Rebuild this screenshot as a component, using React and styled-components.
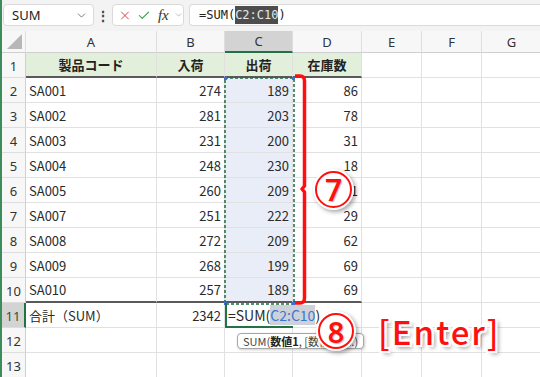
import React from 'react'
import styled, { createGlobalStyle } from 'styled-components'
import { X, Check, ChevronDown } from 'lucide-react'

const GlobalStyle = createGlobalStyle`
  html, body {
    margin: 0;
    padding: 0;
    background: #fff;
    overflow: hidden;
  }
  body {
    font-family: "Noto Sans CJK JP", "Noto Sans", sans-serif;
    color: #222;
  }
`

const COLS = [
  { key: 'A', w: 131 },
  { key: 'B', w: 68 },
  { key: 'C', w: 68 },
  { key: 'D', w: 69 },
  { key: 'E', w: 60 },
  { key: 'F', w: 60 },
  { key: 'G', w: 60 },
]

const DATA = [
  ['SA001', 274, 189, 86],
  ['SA002', 281, 203, 78],
  ['SA003', 231, 200, 31],
  ['SA004', 248, 230, 18],
  ['SA005', 260, 209, 51],
  ['SA007', 251, 222, 29],
  ['SA008', 272, 209, 62],
  ['SA009', 268, 199, 69],
  ['SA010', 257, 189, 69],
]

const App = () => {
  return (
    <Window>
      <GlobalStyle />
      <Toolbar>
        <NameBox>
          <span>SUM</span>
          <ChevronDown size={13} strokeWidth={1.4} color="#555" />
        </NameBox>
        <Dots>⋮</Dots>
        <FxBox>
          <X size={15} strokeWidth={1.6} color="#d9333f" />
          <Check size={15} strokeWidth={1.8} color="#2f9a45" />
          <Fx>fx</Fx>
          <ChevronDown size={10} strokeWidth={1.4} color="#888" />
        </FxBox>
        <FormulaBox>
          =SUM(<RefMark>C2:C10</RefMark>)
        </FormulaBox>
      </Toolbar>

      <Sheet>
        <Corner>
          <svg width="15" height="15" viewBox="0 0 15 15">
            <polygon points="15,0 15,15 0,15" fill="#b7b7b7" />
          </svg>
        </Corner>
        {COLS.map(c => (
          <ColHead key={c.key} $active={c.key === 'C'}>{c.key}</ColHead>
        ))}

        <RowHead>1</RowHead>
        <TitleCell>製品コード</TitleCell>
        <TitleCell>入荷</TitleCell>
        <TitleCell>出荷</TitleCell>
        <TitleCell>在庫数</TitleCell>
        <Cell /><Cell /><Cell />

        {DATA.map((r, i) => (
          <React.Fragment key={r[0]}>
            <RowHead>{i + 2}</RowHead>
            <Cell $last={i === 8}>{r[0]}</Cell>
            <Cell $num $last={i === 8}>{r[1]}</Cell>
            <Cell $num $picked $last={i === 8}>{r[2]}</Cell>
            <Cell $num $last={i === 8}>{r[3]}</Cell>
            <Cell /><Cell /><Cell />
          </React.Fragment>
        ))}

        <RowHead $active>11</RowHead>
        <Cell>合計（SUM）</Cell>
        <Cell $num>2342</Cell>
        <EditCell>
          =SUM(<EditRef>C2:C10</EditRef>)
        </EditCell>
        <Cell /><Cell /><Cell /><Cell />

        {[12, 13].map(n => (
          <React.Fragment key={n}>
            <RowHead>{n}</RowHead>
            <Cell /><Cell /><Cell /><Cell /><Cell /><Cell /><Cell />
          </React.Fragment>
        ))}

        <Marquee>
          <svg width="72" height="229" viewBox="0 0 72 229">
            <rect x="1" y="1" width="69" height="226" fill="none" stroke="#1d6b3f"
              strokeWidth="1.5" strokeDasharray="3 2" />
            <rect x="0" y="0" width="3" height="3" fill="#3b6fd6" />
            <rect x="68" y="0" width="3" height="3" fill="#3b6fd6" />
            <rect x="0" y="225" width="3" height="3" fill="#3b6fd6" />
            <rect x="68" y="225" width="3" height="3" fill="#3b6fd6" />
          </svg>
        </Marquee>

        <Bracket>
          <svg width="20" height="236" viewBox="0 0 20 236">
            <path d="M2 3 H7 Q11.5 3 11.5 8 V113 L9 116 L11.5 119 V225 Q11.5 230 7 230 H2"
              fill="none" stroke="#ff1010" strokeWidth="3.5" strokeLinejoin="round" />
          </svg>
        </Bracket>

        <StepSeven>
          <CircleNum $size={37}>7</CircleNum>
        </StepSeven>

        <Tip>
          SUM(<b>数値1</b>, [数値2], ...)
        </Tip>

        <Callout>
          <CircleNum $size={36}>8</CircleNum>
          <EnterLabel>[Enter]</EnterLabel>
        </Callout>
      </Sheet>
    </Window>
  )
}

const Window = styled.div`
  width: 540px;
  height: 377px;
  overflow: hidden;
  border-left: 2px solid #3c8c5c;
  box-sizing: border-box;
  display: flex;
  flex-direction: column;
`

const Toolbar = styled.div`
  height: 31px;
  flex: none;
  display: flex;
  align-items: center;
  padding: 0 0 1px 1px;
  background: #f3f3f3;
  box-sizing: border-box;
  font-family: "Noto Sans", sans-serif;
`

const NameBox = styled.div`
  width: 91px;
  height: 22px;
  box-sizing: border-box;
  background: #fff;
  border: 1px solid #dadada;
  border-radius: 4px;
  display: flex;
  align-items: center;
  justify-content: space-between;
  padding: 0 5px 0 8px;
  font-size: 13px;
  color: #222;
`

const Dots = styled.div`
  width: 18px;
  text-align: center;
  font-size: 14px;
  font-weight: 700;
  color: #444;
`

const FxBox = styled.div`
  width: 72px;
  height: 22px;
  box-sizing: border-box;
  background: #fff;
  border: 1px solid #dadada;
  border-radius: 4px;
  display: flex;
  align-items: center;
  gap: 5px;
  padding: 0 0 0 5px;
`

const Fx = styled.span`
  font-family: "Liberation Serif", serif;
  font-style: italic;
  font-size: 15px;
  color: #333;
  margin-left: 2px;
`

const FormulaBox = styled.div`
  flex: 1;
  height: 22px;
  margin-left: 5px;
  box-sizing: border-box;
  background: #fff;
  border: 1px solid #dadada;
  border-right: none;
  border-radius: 4px 0 0 4px;
  display: flex;
  align-items: center;
  padding-left: 9px;
  font-family: "DejaVu Sans Mono", monospace;
  font-size: 12px;
  color: #222;
  white-space: pre;
`

const RefMark = styled.span`
  background: #4d4d4d;
  color: #e8e8e8;
  padding: 2px 0;
`

const Sheet = styled.div`
  position: relative;
  display: grid;
  grid-template-columns: 24px ${COLS.map(c => c.w + 'px').join(' ')};
  grid-template-rows: 22px repeat(13, 25px);
  font-size: 13px;
`

const Corner = styled.div`
  background: #f7f7f7;
  border-right: 1px solid #dedede;
  border-bottom: 1px solid #cfcfcf;
  display: flex;
  align-items: flex-end;
  justify-content: flex-end;
  padding: 0 3px 3px 0;
`

const ColHead = styled.div`
  box-sizing: border-box;
  display: flex;
  align-items: center;
  justify-content: center;
  background: ${p => (p.$active ? '#d3d3d3' : '#f7f7f7')};
  border-right: 1px solid #dedede;
  border-bottom: ${p => (p.$active ? '2px solid #217346' : '1px solid #cfcfcf')};
  font-family: "Noto Sans", sans-serif;
  font-size: 13px;
  color: #333;
`

const RowHead = styled.div`
  box-sizing: border-box;
  display: flex;
  align-items: center;
  justify-content: center;
  background: ${p => (p.$active ? '#d3d3d3' : '#f7f7f7')};
  border-right: ${p => (p.$active ? '2px solid #217346' : '1px solid #cfcfcf')};
  border-bottom: 1px solid #dedede;
  font-family: "Noto Sans", sans-serif;
  font-size: 13px;
  color: ${p => (p.$active ? '#1c5c37' : '#333')};
  padding-top: 2px;
`

const Cell = styled.div`
  box-sizing: border-box;
  display: flex;
  align-items: center;
  justify-content: ${p => (p.$num ? 'flex-end' : 'flex-start')};
  padding: 0 3px;
  background: ${p => (p.$picked ? '#e8edf7' : '#fff')};
  border-right: 1px solid #e1e1e1;
  border-bottom: ${p => (p.$last ? '2px solid #5a5a5a' : '1px solid #e1e1e1')};
  white-space: nowrap;
  color: #2a2a2a;
`

const TitleCell = styled(Cell)`
  justify-content: center;
  background: #e2efda;
  font-weight: 700;
  border-bottom: 2px solid #5a5a5a;
  color: #222;
`

const EditCell = styled(Cell)`
  position: relative;
  z-index: 2;
  overflow: visible;
  border-left: 2px solid #217346;
  border-bottom: 2px solid #217346;
  border-right: none;
  background: transparent;
  padding-left: 1px;
  font-size: 14px;
`

const EditRef = styled.span`
  color: #3d75cc;
  background: #cdd2da;
`

const Marquee = styled.div`
  position: absolute;
  left: 222px;
  top: 46px;
  line-height: 0;
  pointer-events: none;
`

const Bracket = styled.div`
  position: absolute;
  left: 291px;
  top: 42px;
  line-height: 0;
`

const CircleNum = styled.div`
  width: ${p => p.$size}px;
  height: ${p => p.$size}px;
  box-sizing: border-box;
  border-radius: 50%;
  border: 2px solid #ff1010;
  background: #fff;
  box-shadow: 0 0 0 2px #fff, 2px 2px 4px 2px rgba(0, 0, 0, 0.35);
  display: flex;
  align-items: center;
  justify-content: center;
  font-family: "Noto Sans", sans-serif;
  font-size: ${p => Math.round(p.$size * 0.8)}px;
  font-weight: 600;
  line-height: 1;
  color: #ff1010;
  text-shadow: 1px 1px 1px rgba(0, 0, 0, 0.25);
`

const StepSeven = styled.div`
  position: absolute;
  left: 313px;
  top: 140px;
`

const Tip = styled.div`
  position: absolute;
  left: 235px;
  top: 302px;
  height: 16px;
  box-sizing: border-box;
  padding: 0 5px;
  display: flex;
  align-items: center;
  background: #fff;
  border: 1px solid #a6a6a6;
  border-radius: 4px;
  box-shadow: 1px 1px 3px rgba(0, 0, 0, 0.2);
  font-family: "Noto Sans CJK JP", sans-serif;
  font-size: 11px;
  color: #444;
  white-space: nowrap;

  b {
    font-weight: 700;
    color: #222;
  }
`

const Callout = styled.div`
  position: absolute;
  left: 316px;
  top: 282px;
  z-index: 3;
  display: flex;
  align-items: center;
  gap: 24px;
`

const EnterLabel = styled.div`
  font-family: "Noto Sans CJK JP", sans-serif;
  font-size: 33px;
  font-weight: 500;
  line-height: 1;
  color: #ff1010;
  letter-spacing: 2px;
  text-shadow:
    -2px 0 0 #fff, 2px 0 0 #fff, 0 -2px 0 #fff, 0 2px 0 #fff,
    -2px -2px 0 #fff, 2px 2px 0 #fff, -2px 2px 0 #fff, 2px -2px 0 #fff,
    3px 3px 4px rgba(0, 0, 0, 0.45);
`

export default App
